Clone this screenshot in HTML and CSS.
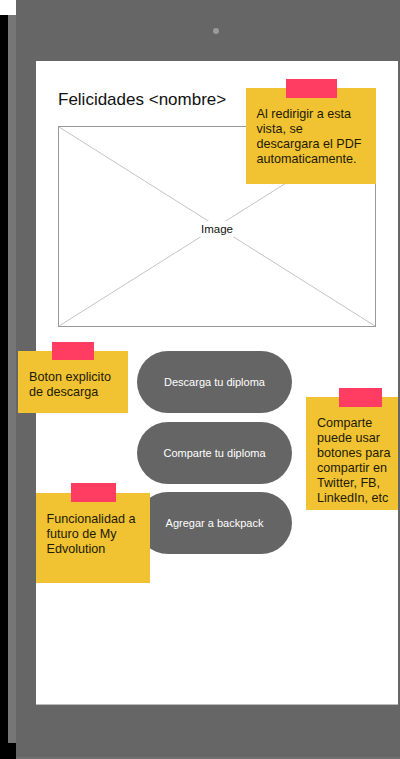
FILE: index.html
```html
<!DOCTYPE html>
<html lang="es">

<head>
    <meta charset="UTF-8">
    <meta name="viewport" content="width=device-width, initial-scale=1.0">
    <title>Felicidades</title>
    <link rel="stylesheet" href="styles.css">
</head>

<body>
    <div class="stage">
        <div class="edge"></div>
        <div class="side"></div>
        <div class="device">
            <div class="device-col">
                <div class="bezel">
                    <span class="camera"></span>
                </div>
                <div class="screen">
                    <h1 class="title">Felicidades &lt;nombre&gt;</h1>
                    <div class="image-box">
                        <svg class="image-x" viewBox="0 0 100 100" preserveAspectRatio="none">
                            <line x1="0" y1="0" x2="100" y2="100" vector-effect="non-scaling-stroke" />
                            <line x1="100" y1="0" x2="0" y2="100" vector-effect="non-scaling-stroke" />
                        </svg>
                        <span class="image-label">Image</span>
                    </div>
                    <div class="actions">
                        <button class="pill-btn">Descarga tu diploma</button>
                        <button class="pill-btn">Comparte tu diploma</button>
                        <button class="pill-btn">Agregar a backpack</button>
                    </div>
                </div>
            </div>
        </div>

        <!-- STICKY NOTES -->
        <div class="note note-pdf">
            <span class="tape"></span>
            Al redirigir a esta vista, se descargara el PDF automaticamente.
        </div>
        <div class="note note-download">
            <span class="tape"></span>
            Boton explicito de descarga
        </div>
        <div class="note note-share">
            <span class="tape"></span>
            Comparte puede usar botones para compartir en Twitter, FB, LinkedIn, etc
        </div>
        <div class="note note-future">
            <span class="tape"></span>
            Funcionalidad a futuro de My Edvolution
        </div>
    </div>
</body>

</html>
```

FILE: styles.css
```css
body {
    font-family: 'Liberation Sans', Arial, sans-serif;
    background-color: #000;
    margin: 0;
}

.stage {
    position: relative;
    display: flex;
    width: 400px;
    height: 759px;
    overflow: hidden;
}

.edge {
    width: 8px;
    background: linear-gradient(#fff 0 15px, #000 15px);
}

.side {
    width: 8px;
    background: linear-gradient(#fff 0 15px, #767676 15px 743px, #000 743px);
}

.device {
    flex: 1;
    height: 757px;
    background-color: #666;
    padding: 0 2px 0 20px;
    border-bottom: 2px solid #707070;
}

.device-col {
    width: 362px;
}

.bezel {
    height: 61px;
    display: flex;
    justify-content: center;
    align-items: center;
}

.camera {
    width: 6px;
    height: 6px;
    border-radius: 50%;
    background-color: #9a9a9a;
    margin-left: -2px;
    margin-top: 1px;
}

.screen {
    height: 644px;
    box-sizing: border-box;
    background-color: #fff;
    padding: 29px 22px 0;
    border-bottom: 1px solid #bbb;
}

.title {
    margin: 0;
    font-size: 17px;
    line-height: 20px;
    font-weight: 400;
    color: #111;
}

.image-box {
    position: relative;
    margin-top: 16px;
    width: 318px;
    height: 201px;
    box-sizing: border-box;
    border: 1px solid #999;
    display: flex;
    justify-content: center;
    align-items: center;
}

.image-x {
    position: absolute;
    top: 0;
    left: 0;
    width: 100%;
    height: 100%;
}

.image-x line {
    stroke: #c4c4c4;
    stroke-width: 1;
}

.image-label {
    position: relative;
    background-color: #fff;
    padding: 2px 4px;
    margin-top: 5px;
    font-size: 11.5px;
    color: #111;
}

.actions {
    display: flex;
    flex-direction: column;
    gap: 8.5px;
    margin: 24px 0 0 79px;
}

.pill-btn {
    width: 155px;
    height: 62px;
    border: none;
    border-radius: 31px;
    background-color: #656565;
    color: #fff;
    font-family: 'Liberation Sans', Arial, sans-serif;
    font-size: 11px;
    padding: 0;
}

/* STICKY NOTES */
.note {
    position: absolute;
    box-sizing: border-box;
    background-color: #f1c232;
    color: #221a05;
    font-size: 12.6px;
    line-height: 15px;
    padding: 19px 8px 0 11px;
}

.tape {
    position: absolute;
    top: -9px;
    height: 19px;
    background-color: #ff3d63;
}

.note-pdf {
    left: 246px;
    top: 88px;
    width: 130px;
    height: 96px;
    padding-left: 10.5px;
}

.note-pdf .tape {
    left: 40px;
    width: 51px;
}

.note-download {
    left: 18px;
    top: 351px;
    width: 110px;
    height: 62px;
}

.note-download .tape {
    left: 34px;
    width: 42px;
    height: 18px;
}

.note-share {
    left: 306px;
    top: 397px;
    width: 92px;
    height: 113px;
    padding-top: 18.5px;
    padding-right: 2px;
}

.note-share .tape {
    left: 33px;
    width: 43px;
}

.note-future {
    left: 36px;
    top: 493px;
    width: 114px;
    height: 90px;
    padding-left: 10.5px;
}

.note-future .tape {
    left: 35px;
    top: -10px;
    width: 45px;
}
```
